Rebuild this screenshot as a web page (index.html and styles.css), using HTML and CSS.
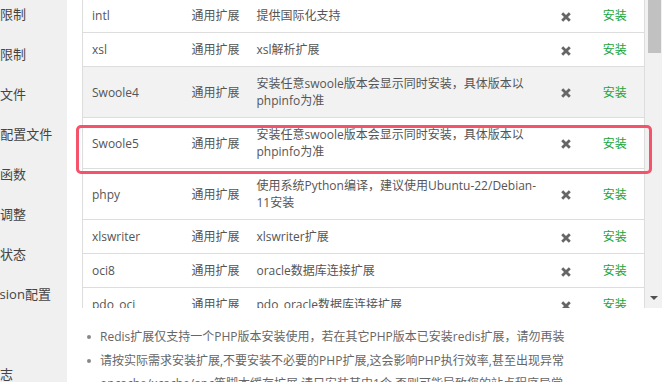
FILE: index.html
```html
<!DOCTYPE html>
<html lang="zh-CN">
<head>
<meta charset="utf-8">
<title>PHP扩展</title>
<link rel="stylesheet" href="styles.css">
</head>
<body>
<div class="app">
  <nav class="sidebar">
    <ul class="menu">
      <li>上传限制</li>
      <li>超时限制</li>
      <li>配置文件</li>
      <li>FPM配置文件</li>
      <li>禁用函数</li>
      <li>性能调整</li>
      <li>负载状态</li>
      <li>Session配置</li>
      <li>日志</li>
      <li>慢日志</li>
    </ul>
  </nav>
  <main class="main">
    <div class="scroll-area">
      <div class="table-wrap">
        <table class="ext-table">
          <colgroup>
            <col class="c-name"><col class="c-type"><col class="c-desc"><col class="c-stat"><col class="c-op">
          </colgroup>
          <tbody>
            <tr><td>intl</td><td>通用扩展</td><td>提供国际化支持</td><td class="stat"><svg class="x" viewBox="0 0 10 10"><path d="M1.2 1.2L8.8 8.8M8.8 1.2L1.2 8.8"/></svg></td><td class="op">安装</td></tr>
            <tr><td>xsl</td><td>通用扩展</td><td>xsl解析扩展</td><td class="stat"><svg class="x" viewBox="0 0 10 10"><path d="M1.2 1.2L8.8 8.8M8.8 1.2L1.2 8.8"/></svg></td><td class="op">安装</td></tr>
            <tr class="hover"><td>Swoole4</td><td>通用扩展</td><td>安装任意swoole版本会显示同时安装，具体版本以phpinfo为准</td><td class="stat"><svg class="x" viewBox="0 0 10 10"><path d="M1.2 1.2L8.8 8.8M8.8 1.2L1.2 8.8"/></svg></td><td class="op">安装</td></tr>
            <tr><td>Swoole5</td><td>通用扩展</td><td>安装任意swoole版本会显示同时安装，具体版本以phpinfo为准</td><td class="stat"><svg class="x" viewBox="0 0 10 10"><path d="M1.2 1.2L8.8 8.8M8.8 1.2L1.2 8.8"/></svg></td><td class="op">安装</td></tr>
            <tr><td>phpy</td><td>通用扩展</td><td>使用系统Python编译，建议使用Ubuntu-22/Debian-11安装</td><td class="stat"><svg class="x" viewBox="0 0 10 10"><path d="M1.2 1.2L8.8 8.8M8.8 1.2L1.2 8.8"/></svg></td><td class="op">安装</td></tr>
            <tr><td>xlswriter</td><td>通用扩展</td><td>xlswriter扩展</td><td class="stat"><svg class="x" viewBox="0 0 10 10"><path d="M1.2 1.2L8.8 8.8M8.8 1.2L1.2 8.8"/></svg></td><td class="op">安装</td></tr>
            <tr><td>oci8</td><td>通用扩展</td><td>oracle数据库连接扩展</td><td class="stat"><svg class="x" viewBox="0 0 10 10"><path d="M1.2 1.2L8.8 8.8M8.8 1.2L1.2 8.8"/></svg></td><td class="op">安装</td></tr>
            <tr><td>pdo_oci</td><td>通用扩展</td><td>pdo_oracle数据库连接扩展</td><td class="stat"><svg class="x" viewBox="0 0 10 10"><path d="M1.2 1.2L8.8 8.8M8.8 1.2L1.2 8.8"/></svg></td><td class="op">安装</td></tr>
          </tbody>
        </table>
      </div>
      <div class="scrollbar">
        <div class="thumb"></div>
        <div class="track-fill"></div>
        <div class="arrow-down"></div>
      </div>
      <div class="highlight"></div>
    </div>
    <ul class="notes">
      <li>Redis扩展仅支持一个PHP版本安装使用，若在其它PHP版本已安装redis扩展，请勿再装</li>
      <li>请按实际需求安装扩展,不要安装不必要的PHP扩展,这会影响PHP执行效率,甚至出现异常</li>
      <li>opcache/xcache/apc等脚本缓存扩展,请只安装其中1个,否则可能导致您的站点程序异常</li>
    </ul>
  </main>
</div>
</body>
</html>
```

FILE: styles.css
```css
* { box-sizing: border-box; }
html, body { margin: 0; padding: 0; }
body {
  font-family: "Open Sans", "Noto Sans CJK SC", sans-serif;
  font-size: 12px;
  color: #555;
  background: #fff;
}
.app {
  display: flex;
  width: 662px;
  height: 382px;
  overflow: hidden;
}
.sidebar {
  width: 67px;
  flex: none;
  background: #f0f0f0;
  overflow: hidden;
}
.menu {
  list-style: none;
  margin: -6px 0 0 -26px;
  padding: 0;
  white-space: nowrap;
}
.menu li {
  height: 40px;
  line-height: 40px;
  font-size: 13px;
  color: #444;
}
.menu li:nth-child(8) { padding-left: 5px; }
.main {
  flex: 1;
  padding-left: 15px;
  min-width: 0;
}
.scroll-area {
  position: relative;
  display: flex;
  height: 308px;
}
.table-wrap {
  width: 563px;
  flex: none;
  overflow: hidden;
}
.ext-table {
  width: 562px;
  margin-top: -2px;
  border-collapse: collapse;
  border: 1px solid #ddd;
  table-layout: fixed;
}
.c-name { width: 100px; }
.c-type { width: 65px; }
.c-desc { width: 300px; }
.c-stat { width: 36px; }
.c-op { width: 61px; }
.ext-table td {
  padding: 8px 0 8px 9px;
  line-height: 17px;
  border-bottom: 1px solid #ddd;
  vertical-align: middle;
}
.ext-table td:nth-child(3) { padding-right: 6px; }
.ext-table tr.hover td { background: #f2f2f2; }
.ext-table td.stat { text-align: center; padding: 8px 0; }
.ext-table td.op { text-align: center; padding: 8px 0 8px 2px; color: #20a53a; }
.x {
  width: 10px;
  height: 10px;
  display: inline-block;
  vertical-align: middle;
}
.x path {
  stroke: #666;
  stroke-width: 2.8;
  fill: none;
}
.scrollbar {
  width: 17px;
  flex: none;
  background: #f1f1f1;
  display: flex;
  flex-direction: column;
  align-items: center;
}
.thumb {
  width: 13px;
  height: 53px;
  background: #c1c1c1;
  margin-left: 2px;
}
.track-fill { flex: 1; }
.arrow-down {
  width: 0;
  height: 0;
  border-left: 4px solid transparent;
  border-right: 4px solid transparent;
  border-top: 4px solid #505050;
  margin: 0 0 8px 1px;
}
.highlight {
  position: absolute;
  left: -6px;
  top: 125px;
  width: 576px;
  height: 49px;
  border: 3px solid #f5536b;
  border-radius: 5px;
  pointer-events: none;
}
.notes {
  list-style: none;
  margin: 0;
  padding: 17px 0 0 5px;
  color: #666;
}
.notes li {
  position: relative;
  padding-left: 13px;
  line-height: 23.5px;
  white-space: nowrap;
}
.notes li::before {
  content: "";
  position: absolute;
  left: 0;
  top: 10px;
  width: 4px;
  height: 4px;
  border-radius: 50%;
  background: #888;
}
```
